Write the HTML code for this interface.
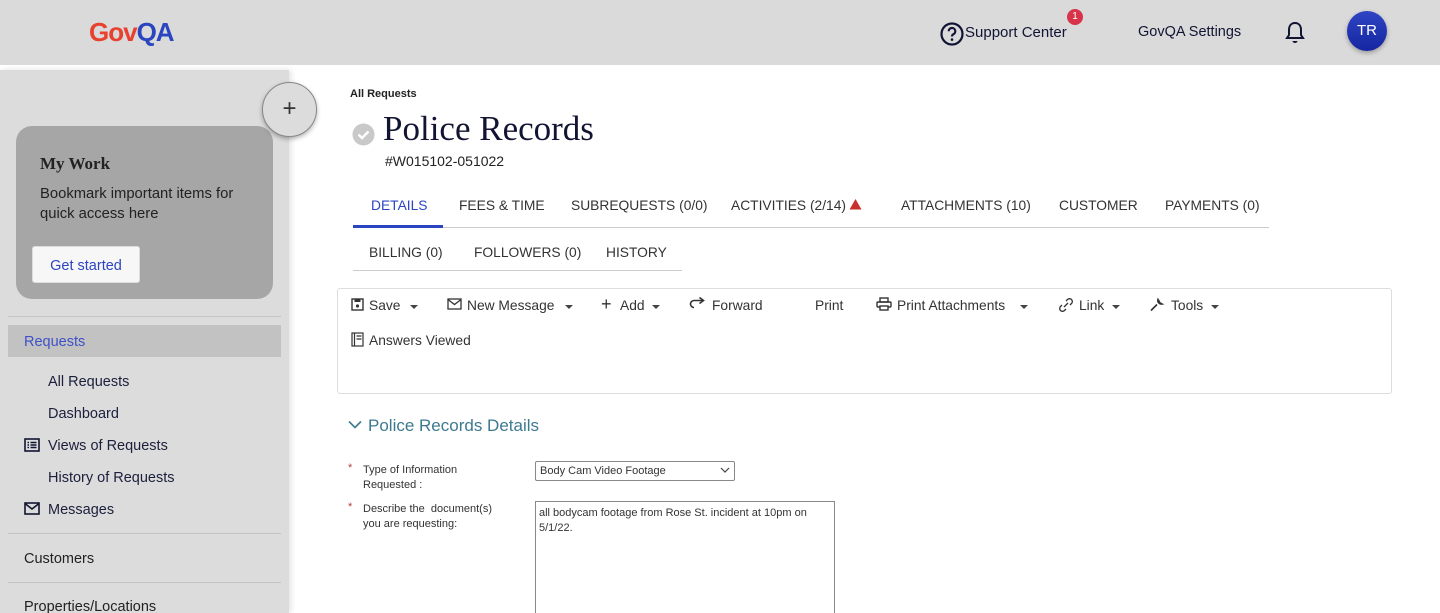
<!DOCTYPE html>
<html style="overflow:hidden;height:613px"><head><meta charset="utf-8"><style>
*{box-sizing:border-box;margin:0;padding:0}
body{width:1440px;height:613px;overflow:hidden;background:#fff;font-family:"Liberation Sans",sans-serif;color:#1b1f3b;position:relative}
.a{position:absolute;white-space:nowrap}
.hdr{position:absolute;left:0;top:0;width:1440px;height:65px;background:#dadada}
.side{position:absolute;left:0;top:70px;width:289px;height:543px;background:#dcdcdc;box-shadow:2px 0 6px rgba(0,0,0,.12)}
.nav{font-size:14.5px;color:#1b1f3b}
.tab{font-size:13.8px;color:#333;top:198px}
.tab2{font-size:13.8px;color:#333;top:245px}
.tb{font-size:13.8px;color:#333;top:298px}
.caret{width:0;height:0;border-left:4px solid transparent;border-right:4px solid transparent;border-top:4px solid #444;position:absolute;top:305px}
</style></head><body>
<div class="hdr"></div>
<div class="a" style="left:89px;top:17px;font-size:26px;font-weight:bold;letter-spacing:-1px"><span style="color:#e8412f">Gov</span><span style="color:#2b45c0">QA</span></div>
<svg class="a" style="left:940px;top:22px" width="24" height="24" viewBox="0 0 24 24"><circle cx="12" cy="12" r="10.5" fill="none" stroke="#111433" stroke-width="2.2"/><path d="M8.7 9.3a3.3 3.3 0 1 1 4.6 3c-1 .5-1.3 1-1.3 2.2" fill="none" stroke="#111433" stroke-width="2.2"/><circle cx="12" cy="17.6" r="1.3" fill="#111433"/></svg>
<div class="a" style="left:965px;top:24px;font-size:15px;color:#111433">Support Center</div>
<div class="a" style="left:1067px;top:9px;width:16px;height:16px;border-radius:50%;background:#d7344a;color:#fff;font-size:10px;text-align:center;line-height:16px">1</div>
<div class="a" style="left:1138px;top:24px;font-size:14.5px;color:#111433">GovQA Settings</div>
<svg class="a" style="left:1284px;top:20px" width="22" height="26" viewBox="0 0 22 26"><path d="M11 3c-4 0-6 3-6 7v5l-2 3h16l-2-3v-5c0-4-2-7-6-7z" fill="none" stroke="#111433" stroke-width="2"/><path d="M8.5 21a2.5 2 0 0 0 5 0z" fill="#111433"/></svg>
<div class="a" style="left:1347px;top:11px;width:40px;height:40px;border-radius:50%;background:linear-gradient(#2f45c4,#1526a0);color:#fff;font-size:15px;text-align:center;line-height:40px;box-shadow:0 2px 5px rgba(0,0,0,.3)">TR</div>

<div class="side"></div>
<div class="a" style="left:16px;top:126px;width:257px;height:173px;border-radius:16px;background:#a6a6a6"></div>
<div class="a" style="left:262px;top:82px;width:55px;height:55px;border-radius:50%;background:#dcdcdc;border:1px solid #888;box-shadow:0 2px 5px rgba(0,0,0,.3);text-align:center;line-height:52px;font-size:24px;color:#333">+</div>
<div class="a" style="left:40px;top:154px;font-family:'Liberation Serif',serif;font-size:17px;font-weight:bold;color:#222">My Work</div>
<div class="a" style="left:40px;top:184px;font-size:14.8px;color:#222;line-height:20px">Bookmark important items for<br>quick access here</div>
<div class="a" style="left:32px;top:246px;width:108px;height:37px;background:#f7f7f7;border-radius:3px;border:1px solid #ddd;color:#2b45c0;font-size:14.5px;text-align:center;line-height:38px">Get started</div>
<div class="a" style="left:8px;top:316px;width:273px;height:1px;background:#c4c4c4"></div>
<div class="a" style="left:8px;top:325px;width:273px;height:32px;background:#c2c2c2"></div>
<div class="a nav" style="left:24px;top:334px;color:#3f51c7">Requests</div>
<div class="a nav" style="left:48px;top:374px">All Requests</div>
<div class="a nav" style="left:48px;top:406px">Dashboard</div>
<svg class="a" style="left:24px;top:438px" width="16" height="14"><rect x="1" y="1" width="14" height="12" fill="none" stroke="#111433" stroke-width="1.6"/><path d="M3.5 4.5h1.5M3.5 7h1.5M3.5 9.5h1.5M6.5 4.5h6M6.5 7h6M6.5 9.5h6" stroke="#111433" stroke-width="1.4"/></svg>
<div class="a nav" style="left:48px;top:438px">Views of Requests</div>
<div class="a nav" style="left:48px;top:470px">History of Requests</div>
<svg class="a" style="left:24px;top:502px" width="16" height="13"><rect x="1" y="1" width="14" height="11" fill="none" stroke="#111433" stroke-width="1.6"/><path d="M1 1.5l7 5.5 7-5.5" fill="none" stroke="#111433" stroke-width="1.6"/></svg>
<div class="a nav" style="left:48px;top:502px">Messages</div>
<div class="a" style="left:8px;top:533px;width:273px;height:1px;background:#c4c4c4"></div>
<div class="a nav" style="left:24px;top:551px;color:#222">Customers</div>
<div class="a" style="left:8px;top:582px;width:273px;height:1px;background:#c4c4c4"></div>
<div class="a nav" style="left:24px;top:599px;color:#222">Properties/Locations</div>

<div class="a" style="left:350px;top:88px;font-size:11px;font-weight:bold;color:#222">All Requests</div>
<svg class="a" style="left:352px;top:123px" width="23" height="23"><circle cx="11.5" cy="11.5" r="11" fill="#c9c9c9"/><path d="M6.5 11.5l3.5 3.5 6.5-6.5" fill="none" stroke="#fff" stroke-width="2.4"/></svg>
<div class="a" style="left:383px;top:109px;font-family:'Liberation Serif',serif;font-size:35px;color:#111433">Police Records</div>
<div class="a" style="left:385px;top:153px;font-size:14px;color:#222">#W015102-051022</div>

<div class="a" style="left:353px;top:227px;width:916px;height:1px;background:#ccc"></div>
<div class="a" style="left:353px;top:225px;width:90px;height:3px;background:#2b45c0"></div>
<div class="a tab" style="left:371px;color:#2b45c0">DETAILS</div>
<div class="a tab" style="left:459px">FEES &amp; TIME</div>
<div class="a tab" style="left:571px">SUBREQUESTS (0/0)</div>
<div class="a tab" style="left:731px">ACTIVITIES (2/14)</div>
<svg class="a" style="left:849px;top:198px" width="13" height="12"><path d="M6.5 1L12.5 11.5H.5z" fill="#c9302c"/></svg>
<div class="a tab" style="left:901px">ATTACHMENTS (10)</div>
<div class="a tab" style="left:1059px">CUSTOMER</div>
<div class="a tab" style="left:1165px">PAYMENTS (0)</div>
<div class="a" style="left:353px;top:270px;width:329px;height:1px;background:#ccc"></div>
<div class="a tab2" style="left:369px">BILLING (0)</div>
<div class="a tab2" style="left:474px">FOLLOWERS (0)</div>
<div class="a tab2" style="left:606px">HISTORY</div>

<div class="a" style="left:337px;top:288px;width:1055px;height:106px;border:1px solid #ddd;border-radius:3px"></div>
<svg class="a" style="left:351px;top:298px" width="13" height="13"><rect x="1" y="1" width="11" height="11" fill="none" stroke="#333" stroke-width="1.4"/><rect x="3.5" y="1" width="6" height="3" fill="#333"/><circle cx="6.5" cy="8" r="1.6" fill="#333"/></svg>
<div class="a tb" style="left:369px">Save</div><div class="caret" style="left:410px"></div>
<svg class="a" style="left:447px;top:298px" width="15" height="12"><rect x="1" y="1" width="13" height="10" fill="none" stroke="#333" stroke-width="1.3"/><path d="M1 1.5l6.5 5 6.5-5" fill="none" stroke="#333" stroke-width="1.3"/></svg>
<div class="a tb" style="left:467px">New Message</div><div class="caret" style="left:565px"></div>
<div class="a" style="left:601px;top:294px;font-size:18px;color:#333">+</div>
<div class="a tb" style="left:620px">Add</div><div class="caret" style="left:652px"></div>
<svg class="a" style="left:689px;top:297px" width="16" height="15"><path d="M14 7.5H5a3.5 3.5 0 0 0 0 7" fill="none" stroke="#333" stroke-width="1.6" transform="translate(0,-4)"/><path d="M10.5 0.5l4 3-4 3" fill="none" stroke="#333" stroke-width="1.6"/></svg>
<div class="a tb" style="left:712px">Forward</div>
<div class="a tb" style="left:815px">Print</div>
<svg class="a" style="left:876px;top:297px" width="16" height="14"><rect x="4" y="1" width="8" height="4" fill="none" stroke="#333" stroke-width="1.4"/><rect x="1" y="5" width="14" height="5" rx="1" fill="none" stroke="#333" stroke-width="1.4"/><rect x="4" y="9" width="8" height="4" fill="#fff" stroke="#333" stroke-width="1.4"/></svg>
<div class="a tb" style="left:897px">Print Attachments</div><div class="caret" style="left:1020px"></div>
<svg class="a" style="left:1058px;top:297px" width="16" height="16"><path d="M6 10l4-4M8 4l1.5-1.5a2.8 2.8 0 0 1 4 4L12 8M8 12l-1.5 1.5a2.8 2.8 0 0 1-4-4L4 8" fill="none" stroke="#333" stroke-width="1.3"/></svg>
<div class="a tb" style="left:1079px">Link</div><div class="caret" style="left:1112px"></div>
<svg class="a" style="left:1149px;top:297px" width="16" height="15"><path d="M2 13.5l6-6M9 2.5a3.5 3.5 0 0 0 4 4.5l-2-1-1-2z" fill="none" stroke="#333" stroke-width="1.6"/></svg>
<div class="a tb" style="left:1171px">Tools</div><div class="caret" style="left:1211px"></div>
<svg class="a" style="left:351px;top:332px" width="13" height="15"><rect x="1" y="1" width="11" height="13" fill="none" stroke="#333" stroke-width="1.2"/><path d="M3.5 1v13M5.5 4h5M5.5 7h5" stroke="#333" stroke-width="1.2"/></svg>
<div class="a tb" style="left:369px;top:333px">Answers Viewed</div>

<svg class="a" style="left:348px;top:420px" width="14" height="10"><path d="M1 1.5l6 6 6-6" fill="none" stroke="#3d7a8f" stroke-width="1.6"/></svg>
<div class="a" style="left:368px;top:416px;font-size:17px;color:#3d7a8f">Police Records Details</div>
<div class="a" style="left:348px;top:462px;font-size:11px;color:#b04040">*</div>
<div class="a" style="left:363px;top:463px;font-size:11px;color:#333;line-height:15px">Type of Information<br>Requested :</div>
<div class="a" style="left:535px;top:461px;width:200px;height:20px;border:1px solid #888;border-radius:2px;font-size:11px;color:#333;padding:3px 4px">Body Cam Video Footage</div>
<svg class="a" style="left:720px;top:467px" width="10" height="7"><path d="M1 1l4 4 4-4" fill="none" stroke="#444" stroke-width="1.2"/></svg>
<div class="a" style="left:348px;top:501px;font-size:11px;color:#b04040">*</div>
<div class="a" style="left:363px;top:502px;font-size:11px;color:#333;line-height:15px">Describe the&nbsp; document(s)<br>you are requesting:</div>
<div class="a" style="left:535px;top:501px;width:300px;height:112px;border:1px solid #888;border-bottom:none;font-size:11px;color:#333;padding:4px 3px;line-height:15px;white-space:normal">all bodycam footage from Rose St. incident at 10pm on 5/1/22.</div>
</body></html>
